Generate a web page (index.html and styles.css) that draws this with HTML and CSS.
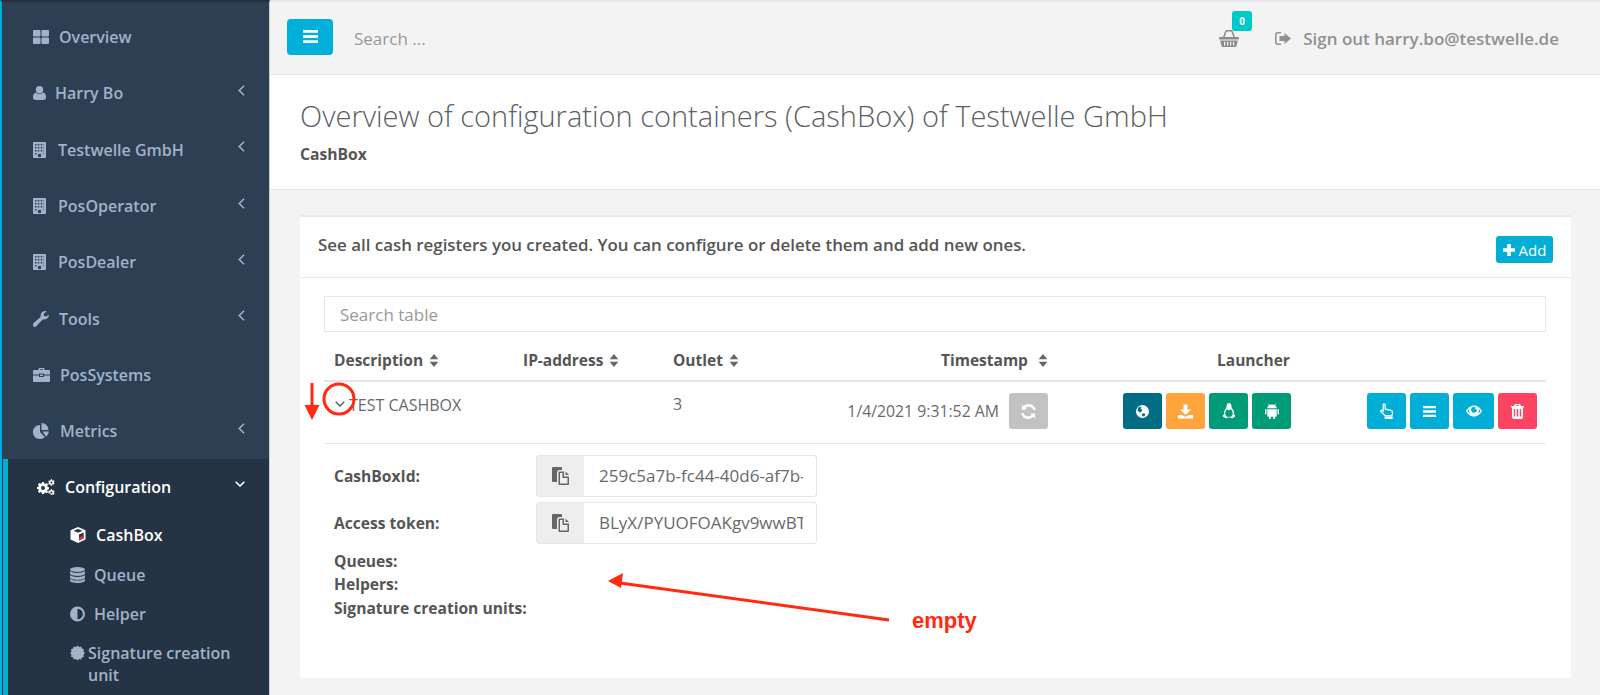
FILE: index.html
```html
<!DOCTYPE html>
<html lang="en">
<head>
    <meta charset="UTF-8" />
    <meta name="viewport" content="width=device-width, initial-scale=1" />
    <title>CashBox</title>
    <link rel="stylesheet" href="styles.css">
</head>
<body>
    <svg class="defs" width="0" height="0">
        <symbol id="i-grid" viewBox="0 0 16 14"><path d="M0 1a1 1 0 0 1 1-1h5.500a1 1 0 0 1 1 1v4.500a1 1 0 0 1-1 1H1a1 1 0 0 1-1-1zM8.500 1a1 1 0 0 1 1-1H15a1 1 0 0 1 1 1v4.500a1 1 0 0 1-1 1H9.500a1 1 0 0 1-1-1zM0 8.500a1 1 0 0 1 1-1h5.500a1 1 0 0 1 1 1V13a1 1 0 0 1-1 1H1a1 1 0 0 1-1-1zM8.500 8.500a1 1 0 0 1 1-1H15a1 1 0 0 1 1 1V13a1 1 0 0 1-1 1H9.500a1 1 0 0 1-1-1z"/></symbol>
        <symbol id="i-user" viewBox="0 0 13 14"><circle cx="6.500" cy="3.700" r="3.700"/><path d="M3 6.500c1 1 2.200 1.500 3.500 1.500S9 7.500 10 6.500c2 .2 3 2 3 4.700 0 1.700-1 2.800-2.500 2.800h-8C1 14 0 12.900 0 11.200 0 8.500 1 6.700 3 6.500z"/></symbol>
        <symbol id="i-building" viewBox="0 0 13 16"><path fill-rule="evenodd" d="M.7 0h11.600c.4 0 .7.300.7.700v14.600c0 .4-.3.700-.7.700H.7a.7.700 0 0 1-.7-.7V.7C0 .3.300 0 .7 0zM2 2v1.500h1.500V2zm2.800 0v1.500h1.500V2zm2.900 0v1.500h1.500V2zm2.800 0v1.500H11V2zM2 5v1.500h1.500V5zm2.800 0v1.500h1.500V5zm2.900 0v1.500h1.500V5zm2.800 0v1.500H11V5zM2 8v1.500h1.500V8zm2.800 0v1.500h1.500V8zm2.900 0v1.500h1.500V8zm2.800 0v1.500H11V8zM2 11v1.500h1.500V11zm8.500 0v1.500H11V11zM5 12v3h3v-3z"/></symbol>
        <symbol id="i-wrench" viewBox="0 0 16 16"><path d="M15.800 3.500c.3 2.500-1.500 5-4.300 5-.6 0-1.100-.1-1.600-.3l-6.300 6.900c-1 1.100-2.500 1.100-3.300.2-.8-.9-.7-2.300.3-3.200l7-6.100C7.300 3.400 8.500.4 11.500 0c.8-.1 1.500 0 2.100.3L10.700 3l.4 2.100 2.100.5z"/></symbol>
        <symbol id="i-case" viewBox="0 0 17 14"><path d="M5.500 2V1c0-.5.500-1 1-1h4c.5 0 1 .5 1 1v1H16c.6 0 1 .4 1 1v3.500H11V5.500H6v1H0V3c0-.6.400-1 1-1zm1.500 0h3V1.300H7zM0 7.500h6V9h5V7.500h6V13c0 .6-.4 1-1 1H1c-.6 0-1-.4-1-1zM7 6.500h3V8H7z"/></symbol>
        <symbol id="i-pie" viewBox="0 0 16 16"><path d="M7 2v7l4.900 4.900A7 7 0 1 1 7 2zM8.500 0A7 7 0 0 1 15.500 7h-7zM9.500 8.500h6.400a7 7 0 0 1-2.900 5.200z"/></symbol>
        <symbol id="i-cogs" viewBox="0 0 18 16"><path fill-rule="evenodd" d="M5 3h2l.3 1.500 1.100.5 1.300-.9 1.400 1.400-.9 1.300.5 1.100 1.300.3v2l-1.300.3-.5 1.100.9 1.300-1.400 1.400-1.300-.9-1.100.5L7 15H5l-.3-1.500-1.100-.5-1.300.9-1.400-1.400.9-1.300-.5-1.100L0 10V8l1.300-.3.500-1.100-.9-1.300 1.400-1.400 1.300.9 1.100-.5zM6 7a2 2 0 1 0 0 4 2 2 0 0 0 0-4z"/><path fill-rule="evenodd" d="M14 0l1 .2.200 1 .9.500.9-.4.600.9-.7.700v1.100l.7.700-.6.900-.9-.4-.9.500-.2 1-1.100.1-.3-1-.9-.5-.9.400-.6-.9.700-.7V3l-.7-.7.600-.9.900.4.900-.5zm.4 2.500a1 1 0 1 0 0 2 1 1 0 0 0 0-2zM14 10l1 .2.200 1 .9.500.9-.4.600.9-.7.700V14l.7.700-.6.900-.9-.4-.9.500-.6.400-.8-.4-.3-1-.9-.5-.9.400-.6-.9.700-.7V13l-.7-.7.600-.9.900.4.900-.5zm.4 2.500a1 1 0 1 0 0 2 1 1 0 0 0 0-2z"/></symbol>
        <symbol id="i-cube" viewBox="0 0 16 16"><path fill="#fff" d="M8 0l7.500 3.200v9.300L8 16 .5 12.500V3.200zM3.500 3.800L8 5.700l4.500-1.900L8 1.900z"/><path fill="#243444" d="M9 7.400l4.600-2v5.900L9 13.500z"/><path fill="#c9382f" d="M9 10.500l4.600-2.200v3L9 13.500z"/></symbol>
        <symbol id="i-db" viewBox="0 0 14 15"><ellipse cx="7" cy="2.300" rx="7" ry="2.300"/><path d="M0 3.800c1 1.200 4 1.800 7 1.800s6-.6 7-1.800v2.400C14 7.500 11 8.400 7 8.400S0 7.500 0 6.200zM0 7.500c1 1.200 4 1.800 7 1.800s6-.6 7-1.800v2.400c0 1.300-3 2.200-7 2.200s-7-.9-7-2.200zM0 10.900c1 1.200 4 1.800 7 1.800s6-.6 7-1.800v1.800c0 1.300-3 2.300-7 2.300s-7-1-7-2.300z"/></symbol>
        <symbol id="i-adjust" viewBox="0 0 14 14"><path fill-rule="evenodd" d="M7 0a7 7 0 1 1 0 14A7 7 0 0 1 7 0zm0 2v10a5 5 0 0 0 0-10z"/></symbol>
        <symbol id="i-cert" viewBox="0 0 14 14"><path d="M14 7L12.600 8.500 13.060 10.500 11.100 11.100 10.500 13.060 8.500 12.600 7 14 5.500 12.600 3.500 13.060 2.900 11.100 .94 10.500 1.400 8.500 0 7 1.400 5.500 .94 3.500 2.900 2.900 3.500 .94 5.500 1.400 7 0 8.500 1.400 10.500 .94 11.100 2.900 13.060 3.500 12.600 5.500z"/></symbol>
        <symbol id="i-bars" viewBox="0 0 14 12"><path d="M.4 0h13.200c.2 0 .4.200.4.400v1.800c0 .2-.2.400-.4.400H.4a.4.400 0 0 1-.4-.4V.4C0 .2.200 0 .4 0zM.4 4.700h13.200c.2 0 .4.200.4.400v1.800c0 .2-.2.400-.4.400H.4a.4.400 0 0 1-.4-.4V5.100c0-.2.200-.4.400-.4zM.4 9.400h13.200c.2 0 .4.200.4.400v1.800c0 .2-.2.400-.4.400H.4a.4.400 0 0 1-.4-.4V9.800c0-.2.200-.4.400-.4z"/></symbol>
        <symbol id="i-basket" viewBox="0 0 20 17"><path fill-rule="evenodd" d="M4 7l2-5.500C6.300.6 7 0 8 0h4c1 0 1.700.6 2 1.500L16 7h3.200c.5 0 .8.300.8.800v1c0 .5-.3.700-.8.700H.8C.3 9.500 0 9.300 0 8.800v-1C0 7.300.3 7 .8 7zm1.700 0h8.600L12.700 2.200c-.1-.4-.4-.6-.8-.6H8.100c-.4 0-.7.200-.8.600z"/><path fill-rule="evenodd" d="M1.200 10.500h17.600L17.500 16c-.1.600-.5 1-1.100 1H3.600c-.6 0-1-.4-1.100-1zM5 11.800v3.700h1.200v-3.700zm3 0v3.700h1.200v-3.700zm3 0v3.700h1.200v-3.700zm3 0v3.700h1.200v-3.700z"/></symbol>
        <symbol id="i-signout" viewBox="0 0 16 13"><path d="M2.500 0H6v1.600H2.800c-.7 0-1.200.5-1.200 1.200v7.400c0 .7.500 1.200 1.200 1.200H6V13H2.500C1.100 13 0 11.900 0 10.500v-8C0 1.100 1.100 0 2.500 0z"/><path d="M9.500 1L16 6.500 9.500 12V9H4.500V4h5z"/></symbol>
        <symbol id="i-globe" viewBox="0 0 14 14"><path fill-rule="evenodd" d="M7 0a7 7 0 1 1 0 14A7 7 0 0 1 7 0zM3 2.500C2 3.500 1.500 5 2 6.500l2 1.500 2-1 .5-2L5 3.500l1-2C5 1.500 4 1.800 3 2.500zM7.500 9L6 10.500 7.500 12.500l2-1 .5-2z"/></symbol>
        <symbol id="i-down" viewBox="0 0 15 14"><path d="M5.500 0h4v5H13L7.500 10.500 2 5h3.500zM0 10.500h4.500L6.200 12h2.600l1.700-1.500H15V14H0z"/></symbol>
        <symbol id="i-linux" viewBox="0 0 14 17"><path fill-rule="evenodd" d="M7 0c1.800 0 2.500 1.500 2.500 3 0 1.800 1 2.800 2 4.500.8 1.400 1 3 .6 4.500.8.400 1.400 1 1.400 1.800 0 1-1.500 1.500-2.500 2.200-.8.600-1.800.300-2.200-.7H5.200c-.4 1-1.400 1.300-2.200.7C2 15.300.5 14.800.5 13.800c0-.8.600-1.400 1.400-1.800-.4-1.500-.2-3.100.6-4.500 1-1.700 2-2.700 2-4.500C4.500 1.500 5.200 0 7 0zM5 6.500C4 8 3 9.500 3 11.500c0 1.300 1 2.500 1.800 3h4.400c.8-.5 1.800-1.700 1.800-3 0-2-1-3.500-2-5-.5 1-1.300 1.300-2 1.300S5.500 7.500 5 6.500z"/></symbol>
        <symbol id="i-android" viewBox="0 0 14 16"><path d="M3.200 1l.6-.4.900 1.300C5.300 1.600 6.100 1.400 7 1.400s1.700.2 2.300.5l.9-1.300.6.400-.8 1.300c1 .7 1.700 1.700 1.700 3H2.300c0-1.300.7-2.300 1.700-3zM2.300 6.300h9.400v6.400c0 .6-.4 1-1 1H10V16H8.300v-2.300H5.700V16H4v-2.300h-.7c-.6 0-1-.4-1-1zM0 6.300h1.500v5H0zM12.500 6.300H14v5h-1.500z"/></symbol>
        <symbol id="i-hand" viewBox="0 0 15 17"><path fill="none" stroke="#fff" stroke-width="1.300" stroke-linejoin="round" d="M3.500 1.800c0-1.300 2-1.300 2 0v4.700l1.700.2 4.500 1.200c1.300.4 1.700 1.400 1.600 2.500l-.5 3.100H5.500L.9 9.200c-.7-1 .6-2.100 1.500-1.200l1.100 1z"/><path fill="#fff" d="M5 14.200h8.500V17H5z"/></symbol>
        <symbol id="i-eye" viewBox="0 0 16 11"><path fill-rule="evenodd" d="M8 0c3.500 0 6.500 2.500 8 5.500C14.500 8.500 11.500 11 8 11S1.500 8.500 0 5.500C1.500 2.500 4.500 0 8 0zM8 1.300C6.800 1.300 5 2.500 5 4.500a3 3 0 1 0 5.700-1.500c.3.500-.2 1-.7 1-.6 0-1-.5-.7-1.200C8.800 1.600 8.500 1.300 8 1.300zM1.500 5.500c.7 1 1.600 2 2.600 2.600C3.400 7 3 6.100 3 5c0-.6.100-1.200.4-1.700-.8.600-1.400 1.300-1.900 2.200zm13 0c-.5-.9-1.100-1.600-1.900-2.200.3.500.4 1.100.4 1.700 0 1.100-.4 2-1.100 3.100 1-.6 1.900-1.600 2.600-2.600z"/></symbol>
        <symbol id="i-trash" viewBox="0 0 13 15"><path fill-rule="evenodd" d="M4.500 0h4c.5 0 .8.300 1 .7l.5 1.300h2.700c.2 0 .3.100.3.300v.9c0 .2-.1.300-.3.300H12v9.500c0 1.100-.7 2-1.500 2h-8C1.700 15 1 14.100 1 13V3.500H.3c-.2 0-.3-.1-.3-.3v-.9c0-.2.100-.3.300-.3H3L3.500.7c.2-.4.500-.7 1-.7zM4.600 2h3.800l-.3-.8H4.900zM2.800 5v7.500H4.200V5zm2.900 0v7.500h1.500V5zm3 0v7.500h1.500V5z"/></symbol>
        <symbol id="i-refresh" viewBox="0 0 14 14"><path d="M13.700 5.700h-1.900C11.200 3.800 9.300 2.500 7.200 2.500c-1.200 0-2.300.4-3.200 1.200l1.400 1.400H.8V.5l1.500 1.500C3.600.8 5.300 0 7.200 0c3.300 0 6 2.400 6.500 5.700zM.3 8.300h1.900c.6 1.900 2.500 3.200 4.600 3.200 1.200 0 2.300-.4 3.200-1.200L8.600 8.900h4.600v4.600L11.700 12c-1.300 1.200-3 2-4.900 2C3.500 14 .8 11.600.3 8.300z"/></symbol>
        <symbol id="i-copy" viewBox="0 0 18 18"><path d="M1 0h8c.5 0 1 .5 1 1v2H7.500C6.100 3 5 4.100 5 5.500V15H1c-.5 0-1-.5-1-1V1c0-.5.500-1 1-1z"/><path fill-rule="evenodd" d="M7.500 4.500H12v5h5V17c0 .5-.5 1-1 1H7.500c-.5 0-1-.5-1-1V5.500c0-.5.500-1 1-1zM13.500 4.500L17 8h-3.500zM8 6v10.500h7.500V11h-5V6z"/></symbol>
        <symbol id="i-plus" viewBox="0 0 12 12"><path d="M4.200 0h3.600v4.200H12v3.600H7.800V12H4.200V7.800H0V4.200h4.200z"/></symbol>
        <symbol id="i-sort" viewBox="0 0 10 15"><path d="M5 0l5 6H0zM0 9h10l-5 6z"/></symbol>
        <symbol id="i-left" viewBox="0 0 6 10"><path fill="none" stroke="currentColor" stroke-width="1.400" d="M5.300.7L1 5l4.300 4.300"/></symbol>
        <symbol id="i-chev" viewBox="0 0 10 6"><path fill="none" stroke="currentColor" stroke-width="1.600" d="M.7.700L5 5l4.300-4.300"/></symbol>
    </svg>

    <div class="app">
        <nav class="sidebar">
            <a class="nav-item"><svg class="ico w16"><use href="#i-grid"/></svg><span class="gap10">Overview</span></a>
            <a class="nav-item"><svg class="ico w13"><use href="#i-user"/></svg><span class="gap9">Harry Bo</span><svg class="caret"><use href="#i-left"/></svg></a>
            <a class="nav-item"><svg class="ico w14"><use href="#i-building"/></svg><span class="gap12">Testwelle GmbH</span><svg class="caret"><use href="#i-left"/></svg></a>
            <a class="nav-item"><svg class="ico w14"><use href="#i-building"/></svg><span class="gap12">PosOperator</span><svg class="caret"><use href="#i-left"/></svg></a>
            <a class="nav-item"><svg class="ico w14"><use href="#i-building"/></svg><span class="gap12">PosDealer</span><svg class="caret"><use href="#i-left"/></svg></a>
            <a class="nav-item"><svg class="ico w16"><use href="#i-wrench"/></svg><span class="gap10">Tools</span><svg class="caret"><use href="#i-left"/></svg></a>
            <a class="nav-item"><svg class="ico w17"><use href="#i-case"/></svg><span class="gap10">PosSystems</span></a>
            <a class="nav-item"><svg class="ico w16"><use href="#i-pie"/></svg><span class="gap11">Metrics</span><svg class="caret"><use href="#i-left"/></svg></a>
            <div class="nav-open">
                <a class="nav-head"><svg class="ico w18"><use href="#i-cogs"/></svg><span class="gap10">Configuration</span><svg class="caret-down"><use href="#i-chev"/></svg></a>
                <a class="sub-item current"><svg class="ico w16"><use href="#i-cube"/></svg><span class="gap10">CashBox</span></a>
                <a class="sub-item"><svg class="ico w15"><use href="#i-db"/></svg><span class="gap9">Queue</span></a>
                <a class="sub-item"><svg class="ico w15"><use href="#i-adjust"/></svg><span class="gap9">Helper</span></a>
                <a class="sub-item wrap"><svg class="ico w15 up"><use href="#i-cert"/></svg><span class="gap3">Signature creation unit</span></a>
            </div>
        </nav>

        <div class="main">
            <header class="topbar">
                <button class="menu-btn"><svg class="ico-bars"><use href="#i-bars"/></svg></button>
                <span class="search">Search ...</span>
                <span class="cart"><svg class="ico-basket"><use href="#i-basket"/></svg><b class="badge">0</b></span>
                <span class="signout"><svg class="ico-signout"><use href="#i-signout"/></svg>Sign out harry.bo@testwelle.de</span>
            </header>

            <section class="page-head">
                <h1>Overview of configuration containers (CashBox) of Testwelle GmbH</h1>
                <p>CashBox</p>
            </section>

            <section class="card">
                <div class="card-head">
                    <p>See all cash registers you created. You can configure or delete them and add new ones.</p>
                    <button class="add-btn"><svg class="ico-plus"><use href="#i-plus"/></svg>Add</button>
                </div>
                <div class="card-body">
                    <div class="table-search">Search table</div>
                    <table>
                        <colgroup>
                            <col class="c1"><col class="c2"><col class="c3"><col class="c4"><col class="c5"><col class="c6">
                        </colgroup>
                        <thead>
                            <tr>
                                <th>Description <svg class="sort"><use href="#i-sort"/></svg></th>
                                <th>IP-address <svg class="sort"><use href="#i-sort"/></svg></th>
                                <th>Outlet <svg class="sort"><use href="#i-sort"/></svg></th>
                                <th class="th-time">Timestamp <svg class="sort sort-wide"><use href="#i-sort"/></svg></th>
                                <th class="th-launcher">Launcher</th>
                                <th></th>
                            </tr>
                        </thead>
                        <tbody>
                            <tr>
                                <td class="td-name"><svg class="row-chev"><use href="#i-chev"/></svg>TEST CASHBOX</td>
                                <td></td>
                                <td class="td-outlet">3</td>
                                <td class="td-time">
                                    <div class="time-wrap"><span>1/4/2021 9:31:52 AM</span><button class="btn grey"><svg class="b-ico"><use href="#i-refresh"/></svg></button></div>
                                </td>
                                <td class="td-launch">
                                    <div class="btns">
                                        <button class="btn teal"><svg class="b-ico sm"><use href="#i-globe"/></svg></button>
                                        <button class="btn orange"><svg class="b-ico"><use href="#i-down"/></svg></button>
                                        <button class="btn green"><svg class="b-ico big"><use href="#i-linux"/></svg></button>
                                        <button class="btn green"><svg class="b-ico big"><use href="#i-android"/></svg></button>
                                    </div>
                                </td>
                                <td class="td-actions">
                                    <div class="btns">
                                        <button class="btn blue"><svg class="b-ico big"><use href="#i-hand"/></svg></button>
                                        <button class="btn blue"><svg class="b-ico sm"><use href="#i-bars"/></svg></button>
                                        <button class="btn blue wide"><svg class="b-ico big"><use href="#i-eye"/></svg></button>
                                        <button class="btn red"><svg class="b-ico"><use href="#i-trash"/></svg></button>
                                    </div>
                                </td>
                            </tr>
                        </tbody>
                    </table>
                    <div class="detail">
                        <div class="detail-row">
                            <label>CashBoxId:</label>
                            <div class="copy-group"><span class="copy-btn"><svg class="ico-copy"><use href="#i-copy"/></svg></span><span class="copy-val">259c5a7b-fc44-40d6-af7b-</span></div>
                        </div>
                        <div class="detail-row">
                            <label>Access token:</label>
                            <div class="copy-group"><span class="copy-btn"><svg class="ico-copy"><use href="#i-copy"/></svg></span><span class="copy-val">BLyX/PYUOFOAKgv9wwBT</span></div>
                        </div>
                        <div class="detail-line first">Queues:</div>
                        <div class="detail-line">Helpers:</div>
                        <div class="detail-line">Signature creation units:</div>
                    </div>
                </div>
            </section>
        </div>
    </div>

    <!-- red marks drawn on top of the screenshot -->
    <svg class="marks" width="1600" height="695" viewBox="0 0 1600 695">
        <circle cx="339" cy="399" r="15" fill="none" stroke="#ff2a10" stroke-width="3"/>
        <path d="M312 383v24" stroke="#ff2a10" stroke-width="3"/>
        <path d="M304.500 405h15L312 420z" fill="#ff2a10"/>
        <path d="M889 620L620 583" stroke="#ff2a10" stroke-width="3"/>
        <path d="M608 581l15-8-2 15z" fill="#ff2a10"/>
    </svg>
    <span class="mark-text">empty</span>
</body>
</html>
```

FILE: styles.css
```css
* {
    box-sizing: border-box;
}
html, body {
    margin: 0;
    height: 695px;
    overflow: hidden;
}
body {
    font-family: "Open Sans", sans-serif;
    font-size: 16px;
    color: #555;
    background: #f3f3f3;
}
.defs {
    position: absolute;
}
.app {
    display: flex;
    height: 695px;
}

/* sidebar */
.sidebar {
    width: 270px;
    flex: none;
    height: 695px;
    overflow: hidden;
    padding-top: 7px;
    background: #2c3f53;
    border-left: 2px solid #00aede;
    border-top: 2px solid #22303f;
    border-right: 1px solid #c9ced4;
    color: #a3b1c9;
    font-weight: 600;
}
.nav-item {
    display: flex;
    align-items: center;
    height: 56.3px;
    padding: 0 24px 0 31px;
}
.ico {
    fill: currentColor;
    flex: none;
    height: 16px;
}
.w13 { width: 13px; height: 14px; }
.w14 { width: 13px; height: 16px; }
.w15 { width: 15px; }
.w16 { width: 16px; }
.w17 { width: 17px; }
.w18 { width: 18px; }
.gap3 { margin-left: 3px; }
.gap9 { margin-left: 9px; }
.gap10 { margin-left: 10px; }
.gap11 { margin-left: 11px; }
.gap12 { margin-left: 12px; }
.caret {
    width: 7px;
    height: 11px;
    margin-left: auto;
    margin-top: -6px;
}
.nav-open {
    margin-left: 1px;
    background: #243444;
    border-left: 5px solid #00aed6;
    padding-bottom: 20px;
}
.nav-head {
    display: flex;
    align-items: center;
    height: 56px;
    padding: 0 24px 0 29px;
    color: #fff;
}
.caret-down {
    width: 10px;
    height: 6px;
    margin-left: auto;
    margin-top: -6px;
}
.sub-item {
    display: flex;
    align-items: center;
    height: 39.5px;
    padding: 0 20px 0 62px;
}
.sub-item.current {
    color: #fff;
}
.sub-item.wrap {
    height: auto;
    padding-top: 8px;
    align-items: flex-start;
    line-height: 22px;
}
.up {
    margin-top: 3px;
}

/* top bar */
.main {
    flex: 1;
    min-width: 0;
}
.topbar {
    display: flex;
    align-items: center;
    height: 75px;
    padding: 0 41px 0 17px;
    background: #f3f3f3;
    border-top: 2px solid #e4e5ee;
    border-bottom: 1px solid #e6e6e6;
}
.menu-btn {
    width: 46px;
    height: 36px;
    margin-top: -3px;
    padding: 0;
    background: #00b0d8;
    border: 0;
    border-radius: 4px;
    display: flex;
    align-items: center;
    justify-content: center;
}
.ico-bars {
    width: 15px;
    height: 13px;
    fill: #fff;
}
.search {
    margin-left: 21px;
    font-size: 17px;
    color: #999;
}
.cart {
    position: relative;
    margin-left: auto;
    width: 20px;
    height: 17px;
    margin-right: 36px;
}
.ico-basket {
    width: 20px;
    height: 17px;
    fill: #8c8c8c;
    display: block;
}
.badge {
    position: absolute;
    left: 13px;
    top: -19px;
    width: 20px;
    height: 20px;
    border-radius: 3px;
    background: #00c9c9;
    color: #fff;
    font-size: 10px;
    line-height: 20px;
    text-align: center;
}
.signout {
    display: flex;
    align-items: center;
    font-size: 17px;
    font-weight: 600;
    color: #919191;
}
.ico-signout {
    width: 16px;
    height: 13px;
    fill: #919191;
    margin-right: 12px;
}

/* page header */
.page-head {
    height: 115px;
    padding: 21px 30px 0;
    background: #fff;
    border-bottom: 1px solid #e6e6e6;
}
.page-head h1 {
    margin: 0;
    font-size: 29px;
    font-weight: 300;
    line-height: 40px;
    color: #5c5f63;
}
.page-head p {
    margin: 7px 0 0;
    font-size: 15.700px;
    font-weight: 700;
    color: #555;
}

/* card */
.card {
    margin: 25px 29px 0 30px;
    height: 463px;
    background: #fff;
    border-top: 2px solid #e7eaec;
}
.card-head {
    display: flex;
    justify-content: space-between;
    height: 61px;
    padding: 0 18px;
    border-bottom: 1px solid #e7eaec;
}
.card-head p {
    margin: 16px 0 0;
    font-size: 16.900px;
    font-weight: 600;
    color: #555;
}
.add-btn {
    margin-top: 19px;
    width: 57px;
    height: 27px;
    padding: 0;
    background: #00aed6;
    border: 0;
    border-radius: 3px;
    color: #fff;
    font-family: inherit;
    font-size: 15px;
    display: flex;
    align-items: center;
    justify-content: center;
}
.ico-plus {
    width: 12px;
    height: 12px;
    fill: #fff;
    margin-right: 4px;
}
.card-body {
    padding: 18px 25px 0 24px;
}
.table-search {
    height: 36px;
    padding: 0 15px;
    border: 1px solid #e5e6e7;
    color: #999;
    font-size: 17px;
    line-height: 36px;
}

/* table */
table {
    width: 100%;
    margin-top: 13px;
    border-collapse: collapse;
    table-layout: fixed;
}
.c1 { width: 189px; }
.c2 { width: 150px; }
.c3 { width: 170px; }
.c4 { width: 227px; }
.c5 { width: 297px; }
th {
    height: 36px;
    padding: 0 10px 6px;
    text-align: left;
    font-size: 15.500px;
    font-weight: 700;
    color: #555;
    border-bottom: 2px solid #e4e6e9;
    white-space: nowrap;
}
.sort {
    width: 10px;
    height: 13px;
    fill: #666;
    margin-left: 2px;
    vertical-align: -1px;
}
.th-time {
    padding: 0 12px 6px 108px;
}
.sort-wide {
    margin-left: 6px;
}
.th-launcher {
    text-align: center;
    padding: 0 0 6px 90px;
}
td {
    height: 62px;
    padding: 0 10px;
    vertical-align: top;
    border-bottom: 1px solid #e7eaec;
}
.td-name {
    padding: 12px 0 0 11px;
    white-space: nowrap;
    color: #676a6c;
    font-size: 16px;
}
.row-chev {
    width: 10px;
    height: 6px;
    color: #666;
    margin-right: 4px;
    vertical-align: 4px;
}
.td-outlet {
    padding-top: 11px;
    color: #676a6c;
}
.td-time {
    padding: 11px 12px 0 0;
}
.time-wrap {
    display: flex;
    justify-content: flex-end;
    white-space: nowrap;
    color: #676a6c;
    font-size: 15.800px;
}
.time-wrap span {
    margin: 7px 10px 0 0;
}
.td-launch {
    padding: 11px 0 0 63px;
}
.td-actions {
    padding: 11px 0 0 10px;
}
.btns {
    display: flex;
    gap: 4px;
}
.btn {
    width: 39px;
    height: 36px;
    padding: 0;
    border: 0;
    border-radius: 3px;
    display: flex;
    align-items: center;
    justify-content: center;
}
.btn.wide {
    width: 41px;
}
.b-ico {
    width: 15px;
    height: 15px;
    fill: #fff;
}
.b-ico.sm {
    width: 13px;
    height: 13px;
}
.b-ico.big {
    width: 16px;
    height: 16px;
}
.grey { background: #c2c2c2; }
.teal { background: #006d85; }
.orange { background: #ffa53c; }
.green { background: #009b77; }
.blue { background: #00aed6; }
.red { background: #ff4463; }

/* details under the row */
.detail {
    padding: 11px 0 0 10px;
}
.detail-row {
    display: flex;
    align-items: center;
    height: 42px;
    margin-bottom: 5px;
}
.detail label, .detail-line {
    font-weight: 700;
    font-size: 15.600px;
    color: #555;
}
.detail label {
    width: 202px;
}
.copy-group {
    display: flex;
    width: 281px;
    height: 42px;
    border: 1px solid #e5e6e7;
    border-radius: 3px;
}
.copy-btn {
    width: 47px;
    background: #eee;
    display: flex;
    align-items: center;
    justify-content: center;
}
.ico-copy {
    width: 18px;
    height: 18px;
    fill: #666;
}
.copy-val {
    width: 204px;
    margin-left: 15px;
    overflow: hidden;
    white-space: nowrap;
    font-size: 17px;
    line-height: 40px;
    color: #676a6c;
}
.detail-line {
    line-height: 23.500px;
}
.detail-line.first {
    margin-top: 6px;
}

/* annotation overlay */
.marks {
    position: absolute;
    left: 0;
    top: 0;
    pointer-events: none;
}
.mark-text {
    position: absolute;
    left: 912px;
    top: 608px;
    font-family: "Liberation Sans", sans-serif;
    font-size: 22px;
    font-weight: 700;
    color: #ff2a10;
}
```
